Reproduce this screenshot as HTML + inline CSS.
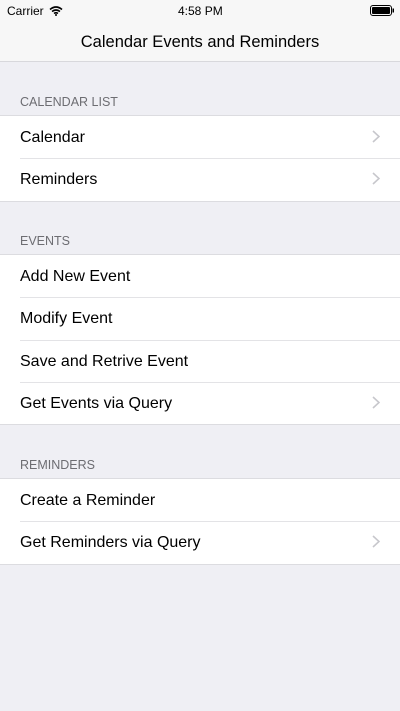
<!DOCTYPE html>
<html><head><style>
*{margin:0;padding:0;box-sizing:border-box}
body{width:400px;height:711px;background:#efeff4;font-family:"Liberation Sans",sans-serif;position:relative;overflow:hidden}
.nav{position:absolute;left:0;top:0;width:400px;height:62px;background:#f7f7f7;border-bottom:1px solid #d8d8dc}
.sb{position:absolute;top:4px;font-size:12px;color:#000}
.title{position:absolute;top:33px;width:100%;text-align:center;font-size:16.5px;color:#000}
.hdr{position:absolute;left:20px;font-size:12.5px;color:#6d6d72}
.grp{position:absolute;left:0;width:400px;background:#fff;border-top:1px solid #dcdce0;border-bottom:1px solid #dcdce0}
.row{position:relative;height:42.3px;font-size:16px;line-height:44px;padding-left:20px;color:#000}
.row+.row:before{content:"";position:absolute;left:20px;right:0;top:0;border-top:1px solid #e3e3e6}
.chev{position:absolute;right:20px;top:14px;width:8px;height:13px}
</style></head><body>
<div class="nav">
<div class="sb" style="left:7px">Carrier
<svg width="14" height="10" viewBox="0 0 14 10" style="vertical-align:-1px;margin-left:2px"><path d="M1 3.5Q7 -1.5 13 3.5M3 5.5Q7 2.5 11 5.5M5 7.5Q7 6 9 7.5" fill="none" stroke="#000" stroke-width="1.6"/><circle cx="7" cy="9" r="1" fill="#000"/></svg></div>
<div class="sb" style="left:178px">4:58 PM</div>
<svg style="position:absolute;left:370px;top:5px" width="25" height="11" viewBox="0 0 25 11"><rect x="0.5" y="0.5" width="21" height="10" rx="2.5" fill="none" stroke="#000"/><rect x="2" y="2" width="18" height="7" rx="1" fill="#000"/><rect x="22.5" y="3.5" width="1.5" height="4" fill="#000"/></svg>
<div class="title">Calendar Events and Reminders</div>
</div>
<div class="hdr" style="top:95px">CALENDAR LIST</div>
<div class="grp" style="top:115px">
<div class="row">Calendar<svg class="chev" viewBox="0 0 8 13"><path d="M1 1l6 5.5-6 5.5" fill="none" stroke="#c7c7cc" stroke-width="1.6"/></svg></div>
<div class="row">Reminders<svg class="chev" viewBox="0 0 8 13"><path d="M1 1l6 5.5-6 5.5" fill="none" stroke="#c7c7cc" stroke-width="1.6"/></svg></div>
</div>
<div class="hdr" style="top:234px">EVENTS</div>
<div class="grp" style="top:254px">
<div class="row">Add New Event</div>
<div class="row">Modify Event</div>
<div class="row">Save and Retrive Event</div>
<div class="row">Get Events via Query<svg class="chev" viewBox="0 0 8 13"><path d="M1 1l6 5.5-6 5.5" fill="none" stroke="#c7c7cc" stroke-width="1.6"/></svg></div>
</div>
<div class="hdr" style="top:458px">REMINDERS</div>
<div class="grp" style="top:478px">
<div class="row">Create a Reminder</div>
<div class="row">Get Reminders via Query<svg class="chev" viewBox="0 0 8 13"><path d="M1 1l6 5.5-6 5.5" fill="none" stroke="#c7c7cc" stroke-width="1.6"/></svg></div>
</div>
</body></html>
